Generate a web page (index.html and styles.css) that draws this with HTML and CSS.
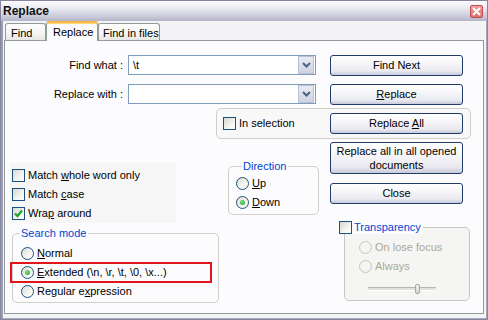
FILE: index.html
```
<!DOCTYPE html>
<html>
<head>
<meta charset="utf-8">
<link rel="stylesheet" href="styles.css">
</head>
<body>
<div class="window">
  <div class="titlebar">
    <span class="title">Replace</span>
    <span class="xbtn"><svg width="9" height="9" viewBox="0 0 9 9"><path d="M1 1L8 8M8 1L1 8" stroke="#fff" stroke-width="2"/></svg></span>
  </div>
  <div class="content">
    <div class="tabs">
      <div class="tab t-find">Find</div>
      <div class="tab t-replace active">Replace</div>
      <div class="tab t-files">Find in files</div>
    </div>
    <div class="panel">
      <div class="row">
        <div class="lbl">Find what :</div>
        <div class="combo"><span class="val">\t</span><span class="drop"><svg width="9" height="6" viewBox="0 0 9 6"><path d="M1 1L4.5 4.5L8 1" fill="none" stroke="#4d6185" stroke-width="2"/></svg></span></div>
        <div class="btn"><span>Find Next</span></div>
      </div>
      <div class="row row2">
        <div class="lbl">Replace with :</div>
        <div class="combo"><span class="val"></span><span class="drop"><svg width="9" height="6" viewBox="0 0 9 6"><path d="M1 1L4.5 4.5L8 1" fill="none" stroke="#4d6185" stroke-width="2"/></svg></span></div>
        <div class="btn"><span><u>R</u>eplace</span></div>
      </div>
      <div class="selgroup">
        <div class="check"><span class="cb"></span><span>In selection</span></div>
        <div class="btn"><span>Replace <u>A</u>ll</span></div>
      </div>
      <div class="lower">
        <div class="leftcol">
          <div class="opts">
            <div class="checks">
              <div class="check"><span class="cb"></span><span>Match <u>w</u>hole word only</span></div>
              <div class="check"><span class="cb"></span><span>Match <u>c</u>ase</span></div>
              <div class="check"><span class="cb"><svg width="11" height="11" viewBox="0 0 11 11"><path d="M2 5.5L4.5 8L9 2.5" fill="none" stroke="#21a121" stroke-width="2.2"/></svg></span><span>Wra<u>p</u> around</span></div>
            </div>
            <div class="group dir">
              <div class="legend">Direction</div>
              <div class="radio first"><span class="rb"></span><span><u>U</u>p</span></div>
              <div class="radio"><span class="rb on"></span><span><u>D</u>own</span></div>
            </div>
          </div>
          <div class="group mode">
            <div class="legend">Search mode</div>
            <div class="radio first"><span class="rb"></span><span><u>N</u>ormal</span></div>
            <div class="radio"><span class="rb on"></span><span><u>E</u>xtended (\n, \r, \t, \0, \x...)</span></div>
            <div class="radio"><span class="rb"></span><span>Regular e<u>x</u>pression</span></div>
            <div class="mark"></div>
          </div>
        </div>
        <div class="rightcol">
          <div class="btn tall"><span>Replace all in all opened<br>documents</span></div>
          <div class="btn close"><span>Close</span></div>
          <div class="thead"><span class="cb"></span><span class="ttext">Transparency</span></div>
          <div class="group trans">
            <div class="radio dis first"><span class="rb"></span><span>On lose focus</span></div>
            <div class="radio dis"><span class="rb"></span><span>Always</span></div>
            <div class="slider"><span class="thumb"></span></div>
          </div>
        </div>
      </div>
    </div>
  </div>
</div>
</body>
</html>
```
FILE: styles.css
```
body {
  margin: 0;
  background: #fff;
  font: 11px/13px "Liberation Sans", Arial, sans-serif;
  color: #000;
}
u { text-decoration: underline; text-underline-offset: 1px; }

.window {
  width: 488px;
  height: 320px;
  box-sizing: border-box;
  border: 1px solid #85859f;
  background: #f4f4f7;
  box-shadow: inset 2px 0 0 #9c9cb2, inset -1px 0 0 #a8a8bc, inset 0 -1px 0 #a8a8bc;
  display: flex;
  flex-direction: column;
  overflow: hidden;
}
.titlebar {
  height: 20px;
  flex: none;
  display: flex;
  align-items: center;
  justify-content: space-between;
  padding: 0 4px 0 2px;
  background: linear-gradient(#fcfcfe, #ececf2 35%, #c8c8d8 80%, #b4b4c8);
}
.title {
  font-weight: bold;
  font-size: 12px;
  color: #111;
}
.xbtn {
  width: 11px;
  height: 11px;
  border: 1px solid #c0504f;
  border-radius: 2px;
  background: linear-gradient(#f2a0a0, #e26c6c);
  display: flex;
  align-items: center;
  justify-content: center;
  margin-top: 1px;
}
.content {
  flex: 1;
  padding: 0 3px 5px 3px;
}
.tabs {
  height: 19px;
  display: flex;
  align-items: flex-end;
  padding-left: 1px;
}
.tab {
  box-sizing: border-box;
  height: 17px;
  border: 1px solid #919b9c;
  border-bottom: none;
  border-radius: 3px 3px 0 0;
  background: linear-gradient(#ffffff, #f4f4f2 60%, #e6e6e2);
  padding: 3px 0 0 5px;
  white-space: nowrap;
}
.t-find { width: 41px; }
.t-replace { width: 52px; padding-left: 6px; }
.t-files { width: 62px; padding-left: 4px; }
.tab.active {
  height: 20px;
  margin-bottom: -1px;
  background: #fcfcfe;
  border-top: 2px solid #f8b848;
  box-shadow: inset 0 1px 0 #ffd878;
  padding-top: 3px;
  position: relative;
  z-index: 1;
}
.panel {
  height: 274px;
  box-sizing: border-box;
  border: 1px solid #919b9c;
  background: #fcfcfe;
  padding-top: 14px;
}
.row {
  display: flex;
  align-items: flex-start;
  height: 21px;
}
.row2 { margin-top: 8px; }
.lbl {
  width: 118px;
  text-align: right;
  line-height: 20px;
  margin-right: 5px;
}
.combo {
  box-sizing: border-box;
  width: 188px;
  height: 20px;
  border: 1px solid #7f9db9;
  background: #fff;
  display: flex;
  justify-content: space-between;
  align-items: stretch;
  margin-right: 14px;
}
.val { padding-left: 4px; line-height: 18px; }
.drop {
  box-sizing: border-box;
  width: 16px;
  margin: 0 1px 0 0;
  border: 1px solid #b9c1d5;
  background: linear-gradient(#e8ebf3, #cfd4e2);
  display: flex;
  align-items: center;
  justify-content: center;
}
.btn {
  box-sizing: border-box;
  width: 133px;
  height: 21px;
  border: 1px solid #1f3c68;
  border-radius: 3px;
  background: linear-gradient(#ffffff, #f6f6f9 40%, #e9e9f0 80%, #c8cadb);
  display: flex;
  align-items: center;
  justify-content: center;
  text-align: center;
}
.btn.tall { height: 32px; margin-top: 3px; line-height: 14px; }
.btn.close { margin-top: 9px; }

.selgroup {
  box-sizing: border-box;
  margin: 3px 0 0 211px;
  width: 255px;
  height: 31px;
  border: 1px solid #cfcfc8;
  border-radius: 5px;
  background: #f8f8f8;
  padding: 4px 7px 4px 6px;
  display: flex;
  align-items: center;
  justify-content: space-between;
}
.check {
  display: flex;
  align-items: center;
  height: 19px;
}
.cb {
  box-sizing: border-box;
  width: 13px;
  height: 13px;
  border: 1px solid #1c5180;
  background: linear-gradient(135deg, #d8d8d0, #f4f4f0 60%, #ffffff);
  margin-right: 3px;
  display: flex;
  align-items: center;
  justify-content: center;
  flex: none;
}
.lower {
  display: flex;
}
.leftcol {
  width: 325px;
}
.opts {
  display: flex;
  align-items: flex-start;
  margin-top: 24px;
}
.checks {
  box-sizing: border-box;
  margin-left: 5px;
  width: 166px;
  height: 60px;
  background: #f6f6f6;
  padding: 3px 0 0 2px;
}
.group {
  box-sizing: border-box;
  border: 1px solid #cfcfc8;
  border-radius: 5px;
  position: relative;
}
.legend {
  display: table;
  margin-top: -7px;
  margin-left: 6px;
  padding: 0 2px 0 1px;
  background: #fcfcfe;
  color: #0046d5;
  height: 13px;
}
.radio {
  display: flex;
  align-items: center;
  height: 19px;
}
.rb {
  box-sizing: border-box;
  width: 13px;
  height: 13px;
  border: 1px solid #1c5180;
  border-radius: 50%;
  background: linear-gradient(135deg, #dcdcd4, #f6f6f2 60%, #ffffff);
  margin-right: 3px;
  flex: none;
  display: flex;
  align-items: center;
  justify-content: center;
}
.rb.on::after {
  content: "";
  width: 5px;
  height: 5px;
  border-radius: 50%;
  background: radial-gradient(circle at 40% 35%, #7be07a, #21a121);
}
.dir {
  margin: 3px 0 0 52px;
  width: 91px;
  padding: 0 0 2px 7px;
}
.dir .radio.first { margin-top: 1px; }
.mode {
  margin: 10px 0 0 7px;
  width: 207px;
  padding: 0 0 1px 8px;
}
.mode .legend { margin-left: -1px; }
.mode .radio.first { margin-top: 4px; }
.mark {
  position: absolute;
  left: -3px;
  top: 28px;
  width: 202px;
  height: 21px;
  box-sizing: border-box;
  border: 2px solid #e2141c;
}
.rightcol {
  width: 140px;
  display: flex;
  flex-direction: column;
}
.thead {
  display: flex;
  align-items: center;
  align-self: flex-start;
  height: 13px;
  margin: 17px 0 0 9px;
  padding-right: 2px;
  background: #fcfcfe;
  position: relative;
  z-index: 1;
}
.thead .cb { margin-right: 2px; }
.ttext { color: #0046d5; }
.trans {
  margin: -7px 0 0 14px;
  width: 126px;
  height: 74px;
  background: #f5f5f4;
  border-color: #c8c6c0;
  padding: 10px 0 0 14px;
}
.radio.dis { color: #aca899; }
.radio.dis .rb {
  border-color: #c9c7ba;
  background: #f4f4f0;
}
.slider {
  margin: 7px 0 0 9px;
  width: 68px;
  height: 12px;
  position: relative;
  display: flex;
  align-items: center;
}
.slider::before {
  content: "";
  width: 100%;
  height: 2px;
  border-top: 1px solid #b8b6ae;
  border-bottom: 1px solid #fff;
  background: #e2e0d8;
}
.thumb {
  position: absolute;
  left: 47px;
  top: 1px;
  width: 5px;
  height: 10px;
  border: 1px solid #a8a69e;
  border-radius: 2px;
  background: linear-gradient(#f4f4f0, #d8d6ce);
  box-sizing: border-box;
}
```
